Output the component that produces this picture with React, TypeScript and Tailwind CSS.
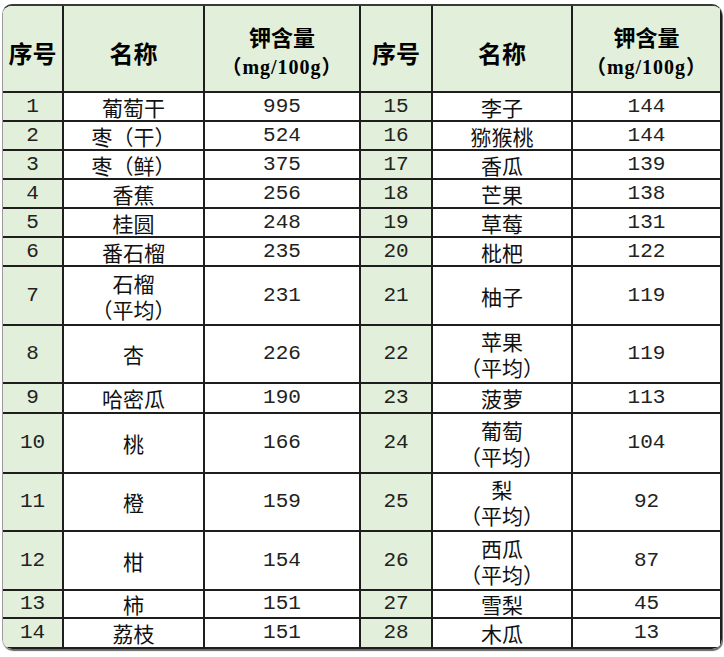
type Row = { no: number; name: string; value: number };

const LEFT: Row[] = [
  { no: 1, name: "葡萄干", value: 995 },
  { no: 2, name: "枣（干）", value: 524 },
  { no: 3, name: "枣（鲜）", value: 375 },
  { no: 4, name: "香蕉", value: 256 },
  { no: 5, name: "桂圆", value: 248 },
  { no: 6, name: "番石榴", value: 235 },
  { no: 7, name: "石榴\n（平均）", value: 231 },
  { no: 8, name: "杏", value: 226 },
  { no: 9, name: "哈密瓜", value: 190 },
  { no: 10, name: "桃", value: 166 },
  { no: 11, name: "橙", value: 159 },
  { no: 12, name: "柑", value: 154 },
  { no: 13, name: "柿", value: 151 },
  { no: 14, name: "荔枝", value: 151 },
];

const RIGHT: Row[] = [
  { no: 15, name: "李子", value: 144 },
  { no: 16, name: "猕猴桃", value: 144 },
  { no: 17, name: "香瓜", value: 139 },
  { no: 18, name: "芒果", value: 138 },
  { no: 19, name: "草莓", value: 131 },
  { no: 20, name: "枇杷", value: 122 },
  { no: 21, name: "柚子", value: 119 },
  { no: 22, name: "苹果\n（平均）", value: 119 },
  { no: 23, name: "菠萝", value: 113 },
  { no: 24, name: "葡萄\n（平均）", value: 104 },
  { no: 25, name: "梨\n（平均）", value: 92 },
  { no: 26, name: "西瓜\n（平均）", value: 87 },
  { no: 27, name: "雪梨", value: 45 },
  { no: 28, name: "木瓜", value: 13 },
];

const cell = "flex items-center justify-center border-r-2 border-b-2 border-[#1e1e1e] text-center";
const cjk = "font-['Noto_Sans_CJK_SC',sans-serif]";
const mono = "font-['Liberation_Mono','Noto_Sans_CJK_SC',monospace]";

function HeaderCells() {
  return (
    <>
      <div className={`${cell} bg-[#e2efda] pt-[8px] text-[24px] font-bold ${cjk}`}>序号</div>
      <div className={`${cell} bg-[#e2efda] pt-[8px] text-[24px] font-bold ${cjk}`}>名称</div>
      <div className={`${cell} flex-col bg-[#e2efda] pt-[6px] font-bold leading-[30px]`}>
        <span className={`text-[22px] ${cjk}`}>钾含量</span>
        <span className="font-['Liberation_Serif','Noto_Sans_CJK_SC',serif] text-[20px] tracking-[1px]">
          <span className={cjk}>（</span>mg/100g<span className={cjk}>）</span>
        </span>
      </div>
    </>
  );
}

function BodyCells({ row }: { row: Row }) {
  return (
    <>
      <div className={`${cell} bg-[#e2efda] text-[21px] text-[#222] ${mono}`}>{row.no}</div>
      <div className={`${cell} whitespace-pre-line bg-white text-[21px] leading-[26px] text-[#111] ${cjk}`}>
        {row.name}
      </div>
      <div className={`${cell} bg-white text-[21px] text-[#222] ${mono}`}>{row.value}</div>
    </>
  );
}

export default function App() {
  return (
    <div className="min-h-[657px] bg-white pt-[4px] pl-[2px]">
      <div className="w-[720px] overflow-hidden rounded-[10px] border-t-2 border-l border-t-[#3a3a3a] border-l-[#9a9a9a] shadow-[1px_2px_1px_rgba(0,0,0,0.6)]">
        <div className="grid grid-cols-[61px_141px_156px_72px_140px_149px] grid-rows-[87px_repeat(6,29px)_59px_58px_30px_60px_58px_59px_28px_30px]">
          <HeaderCells />
          <HeaderCells />
          {LEFT.map((row, i) => (
            <div key={row.no} className="contents">
              <BodyCells row={row} />
              <BodyCells row={RIGHT[i]} />
            </div>
          ))}
        </div>
      </div>
    </div>
  );
}
